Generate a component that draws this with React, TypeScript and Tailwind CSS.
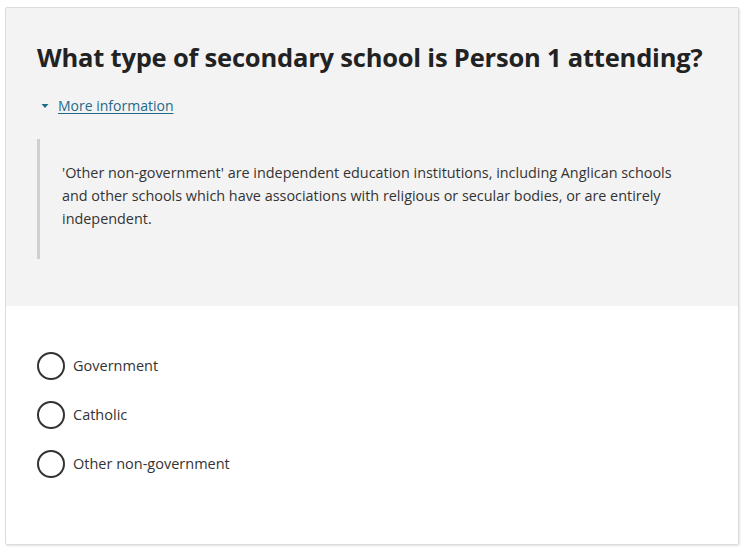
const options = ["Government", "Catholic", "Other non-government"]

const App = () => {
  return (
    <div
      className="min-h-[549px] bg-white pl-[5px] pr-[6px] pt-[7px] pb-[4px]"
      style={{ fontFamily: '"Open Sans", "Noto Sans", sans-serif' }}
    >
      <div className="border border-[#dcdcdc] rounded-[2px] shadow-[1px_1px_2px_rgba(0,0,0,0.12)] h-[538px] flex flex-col">
        <div className="bg-[#f3f3f3] h-[298px] pl-[31px] pr-[10px] pt-[33px]">
          <h1 className="text-[25.5px] leading-[32px] font-bold text-[#222] tracking-[-0.2px] whitespace-nowrap">
            What type of secondary school is Person 1 attending?
          </h1>
          <div className="mt-[23px] flex items-center gap-[8px]">
            <svg width="10" height="10" viewBox="0 0 10 10" className="ml-[3px]">
              <path d="M1.5 3 L8.5 3 L5 7 Z" fill="#1d6a8a" />
            </svg>
            <a href="#" className="text-[14px] leading-[20px] text-[#1d6a8a] underline underline-offset-2">
              More information
            </a>
          </div>
          <div className="mt-[23px] border-l-[3px] border-[#cfcfcf] pl-[22px] pt-[22px] h-[120px]">
            <p className="text-[14.4px] leading-[23px] text-[#333] max-w-[630px]">
              'Other non-government' are independent education institutions, including Anglican schools and other schools which have associations with religious or secular bodies, or are entirely independent.
            </p>
          </div>
        </div>
        <div className="pl-[31px] pt-[46px] flex flex-col gap-[21px]">
          {options.map((o) => (
            <label key={o} className="flex items-center gap-[8px]">
              <span className="w-[28px] h-[28px] rounded-full border-2 border-[#333] bg-white" />
              <span className="text-[14.5px] text-[#333]">{o}</span>
            </label>
          ))}
        </div>
      </div>
    </div>
  )
}

export default App
